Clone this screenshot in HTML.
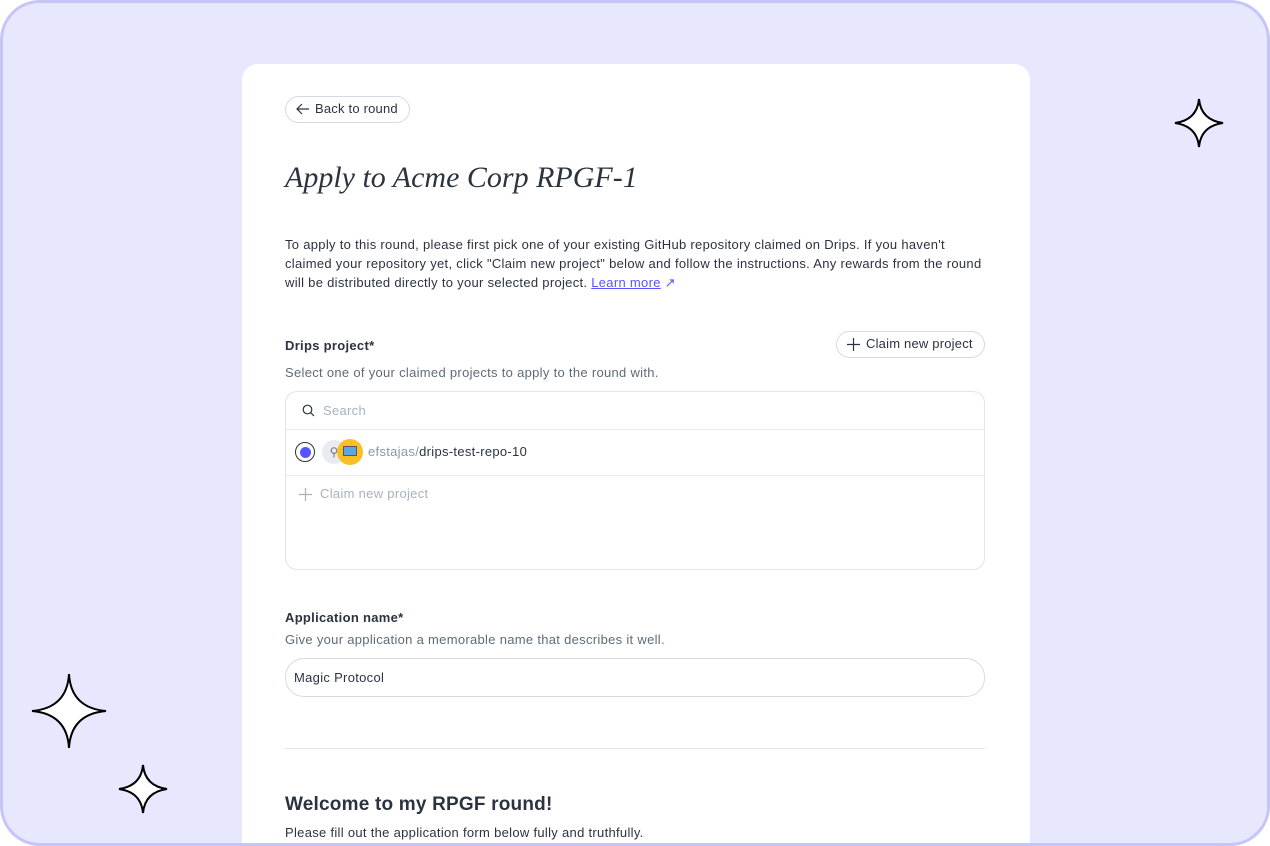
<!DOCTYPE html>
<html><head><style>
*{box-sizing:border-box;margin:0;padding:0}
body{width:1270px;height:846px;background:#fff;font-family:"Liberation Sans",sans-serif;color:#2b3340;overflow:hidden}
.frame{position:absolute;left:0;top:0;width:1270px;height:846px;border:3px solid #c5c5fa;border-radius:40px;background:#e7e7fd;overflow:hidden}
.card{position:absolute;left:239px;top:61px;width:788px;height:800px;background:#fff;border-radius:16px}
.a{position:absolute;white-space:nowrap}
.pill{position:absolute;border:1px solid #d4dae3;border-radius:14px;background:#fff;font-size:13px;color:#2b3340;letter-spacing:0.2px}
.t13{font-size:13px;letter-spacing:0.3px}
.muted{color:#5f6b7a}
</style></head><body>
<div class="frame">
<svg style="position:absolute;left:0;top:0" width="1270" height="846">
<g fill="#fff" stroke="#000" stroke-width="2">
<path d="M66 671 Q68 705 103 708 Q68 711 66 745 Q64 711 29 708 Q64 705 66 671Z"/>
<path d="M140 762 Q142 783 164 786 Q142 789 140 810 Q138 789 116 786 Q138 783 140 762Z"/>
<path d="M1196 96 Q1198 117 1220 120 Q1198 123 1196 144 Q1194 123 1172 120 Q1194 117 1196 96Z"/>
</g></svg>
<div class="card">
<div class="pill" style="left:43px;top:32px;width:125px;height:27px;padding:4px 0 0 29px">Back to round</div>
<svg class="a" style="left:54px;top:39px" width="14" height="12"><path d="M13 6H1M6 1L1 6L6 11" fill="none" stroke="#2b3340" stroke-width="1.2"/></svg>
<div class="a" style="left:43px;top:97px;font-family:'Liberation Serif',serif;font-style:italic;font-size:30px;color:#2b3340">Apply to Acme Corp RPGF-1</div>
<div class="a t13" style="left:43px;top:171px;line-height:19px;white-space:normal;width:705px">To apply to this round, please first pick one of your existing GitHub repository claimed on Drips. If you haven't claimed your repository yet, click "Claim new project" below and follow the instructions. Any rewards from the round will be distributed directly to your selected project. <span style="color:#5555ff;text-decoration:underline">Learn more</span> <span style="color:#5555ff">↗</span></div>
<div class="a t13" style="left:43px;top:274px;font-weight:bold">Drips project*</div>
<div class="pill" style="left:594px;top:267px;width:149px;height:27px;padding:4px 0 0 29px">Claim new project</div>
<svg class="a" style="left:605px;top:274px" width="13" height="13"><path d="M6.5 0V13M0 6.5H13" stroke="#2b3340" stroke-width="1.2"/></svg>
<div class="a t13 muted" style="left:43px;top:301px">Select one of your claimed projects to apply to the round with.</div>
<div class="a" style="left:43px;top:327px;width:700px;height:179px;border:1px solid #e1e5ea;border-radius:12px"></div>
<svg class="a" style="left:60px;top:340px" width="13" height="13"><circle cx="5.5" cy="5.5" r="4.3" fill="none" stroke="#2b3340" stroke-width="1.2"/><path d="M8.7 8.7L12 12" stroke="#2b3340" stroke-width="1.2"/></svg>
<div class="a t13" style="left:81px;top:339px;color:#a7b2bf">Search</div>
<div class="a" style="left:44px;top:365px;width:698px;height:1px;background:#e8ecf0"></div>
<div class="a" style="left:53px;top:378px;width:20px;height:20px;border:1.5px solid #2b3340;border-radius:50%"></div>
<div class="a" style="left:57.5px;top:382.5px;width:11px;height:11px;background:#5555ff;border-radius:50%"></div>
<div class="a" style="left:80px;top:376px;width:24px;height:24px;background:#e8ebef;border-radius:50%;font-size:12px;text-align:center;line-height:24px;color:#777">⚲</div>
<div class="a" style="left:95px;top:375px;width:26px;height:26px;background:#fbbf24;border-radius:50%"></div>
<div class="a" style="left:101px;top:382px;width:14px;height:10px;background:#5aa7e6;border:1.5px solid #556"></div>
<div class="a t13" style="left:126px;top:380px;color:#8c97a5">efstajas/<span style="color:#2b3340">drips-test-repo-10</span></div>
<div class="a" style="left:44px;top:411px;width:698px;height:1px;background:#e8ecf0"></div>
<svg class="a" style="left:57px;top:424px" width="13" height="13"><path d="M6.5 0V13M0 6.5H13" stroke="#a7b2bf" stroke-width="1.2"/></svg>
<div class="a t13" style="left:78px;top:422px;color:#a7b2bf">Claim new project</div>
<div class="a t13" style="left:43px;top:546px;font-weight:bold">Application name*</div>
<div class="a t13 muted" style="left:43px;top:568px">Give your application a memorable name that describes it well.</div>
<div class="a" style="left:43px;top:594px;width:700px;height:39px;border:1px solid #d4dae3;border-radius:19px"></div>
<div class="a t13" style="left:52px;top:606px">Magic Protocol</div>
<div class="a" style="left:43px;top:684px;width:700px;height:1px;background:#e4e8ec"></div>
<div class="a" style="left:43px;top:730px;font-size:19px;font-weight:bold;letter-spacing:0.2px">Welcome to my RPGF round!</div>
<div class="a t13" style="left:43px;top:761px">Please fill out the application form below fully and truthfully.</div>
</div>
</div>
</body></html>
